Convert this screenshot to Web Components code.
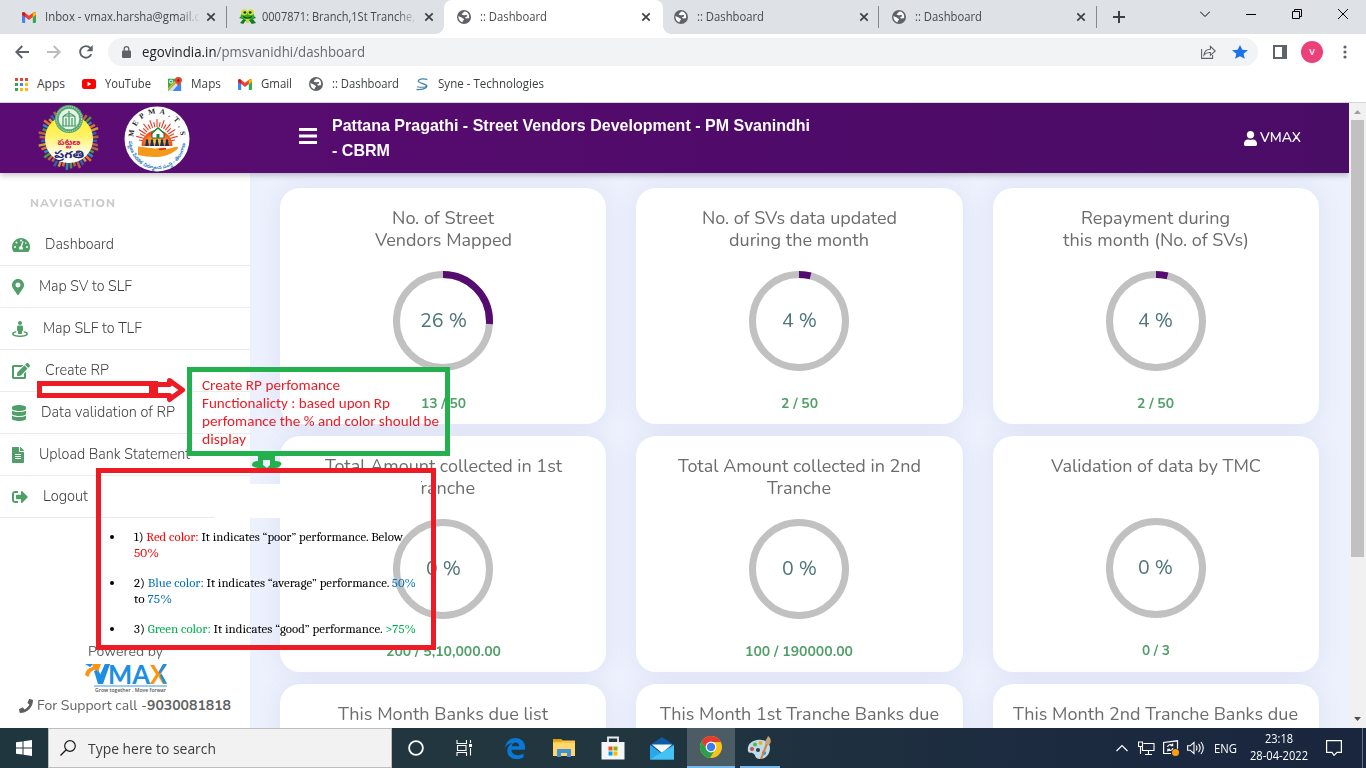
<!DOCTYPE html>
<html lang="en">
<head>
<meta charset="utf-8">
<title>:: Dashboard</title>
<style>
html,body{margin:0;height:768px;overflow:hidden;background:#fff}
</style>
</head>
<body>
<desk-screen></desk-screen>
<script>
const el = (name, html, setup) => customElements.define(name, class extends HTMLElement {
  constructor() {
    super();
    const root = this.attachShadow({ mode: 'open' });
    root.innerHTML = typeof html === 'function' ? html(this) : html;
    if (setup) setup(this, root);
  }
});

/* ---------- icon library ---------- */
const ICONS = {
  globe: ['0 0 14 14', '<circle cx="7" cy="7" r="7" fill="#5f6368"/><path d="M1.600 5.700C2.400 7.200 4.300 6.700 5 7.700c.5.9 1.900.5 2 1.500 0 1.200-1.700 1-1.300 3C3.200 11.800 1 9.200 1.600 5.700zM8 1.600c-1.900.3-1.500 1.500-2.700 1.900-1.100.4-.4 1.500.6 1.500 1.100 0 1.700.6 2.500.1.800-.4 2 0 1.800.9-.1.900-1.600.8-2 1.500-.3.800.9 1 1.800.9 1-.1 1.400.1 2.100-.4C12.700 5.100 11.100 1.900 8 1.600z" fill="#fff"/>'],
  gmail: ['0 0 14 11', '<path d="M0 1.500V10a1 1 0 0 0 1 1h2.200V5z" fill="#4285f4"/><path d="M14 1.500V10a1 1 0 0 1-1 1h-2.200V5z" fill="#34a853"/><path d="M0 2.500V1.600C0 .2 1.500-.4 2.600.4L7 3.700 11.400.4C12.500-.4 14 .2 14 1.600v.9L10.800 5.100 7 8 3.200 5.100z" fill="#ea4335"/><path d="M0 1.600v1.200l3.200 2.400V.9C1.800-.4 0 .2 0 1.600z" fill="#c5221f"/><path d="M14 1.600v1.200l-3.200 2.400V.9C12.200-.4 14 .2 14 1.600z" fill="#fbbc04"/>'],
  frog: ['0 0 16 16', '<path d="M0 9l4 1-3 4 3 1 2-3h4l2 3 4-1-3-4 3-1-3-3H4z" fill="#157b25"/><ellipse cx="8" cy="7" rx="6.500" ry="4.300" fill="#35a92a"/><circle cx="5" cy="3.300" r="3" fill="#cfe13a"/><circle cx="11" cy="3.300" r="3" fill="#cfe13a"/><circle cx="5.500" cy="3.500" r="1.300" fill="#173d0a"/><circle cx="10.500" cy="3.500" r="1.300" fill="#173d0a"/><path d="M4 7.500q4 3 8 0" stroke="#0c5416" fill="none"/><path d="M6 10h4l-1 4H7z" fill="#c6d846"/>'],
  close: ['0 0 10 10', '<path d="M1.300 1.300l7.400 7.400M8.700 1.300L1.300 8.700" stroke="#3c4043" stroke-width="1.700"/>'],
  plus: ['0 0 12 12', '<path d="M6 0v12M0 6h12" stroke="#3c4043" stroke-width="2"/>'],
  back: ['0 0 14 14', '<path d="M14 7H1.500M7.300 1L1.300 7l6 6" stroke="#5f6368" stroke-width="1.900" fill="none"/>'],
  fwd: ['0 0 14 14', '<path d="M0 7h12.500M6.700 1l6 6-6 6" stroke="#babcbe" stroke-width="1.900" fill="none"/>'],
  reload: ['0 0 14 14', '<path d="M12.300 9.200A5.800 5.800 0 1 1 11.300 3" stroke="#5f6368" stroke-width="1.900" fill="none"/><path d="M13.700 0v6.300H7.500z" fill="#5f6368"/>'],
  lock: ['0 0 9 12', '<rect y="4.500" width="9" height="7.500" rx="1" fill="#5f6368"/><path d="M2.200 5V3a2.300 2.300 0 0 1 4.600 0v2" stroke="#5f6368" stroke-width="1.300" fill="none"/>'],
  share: ['0 0 15 14', '<path d="M.6 4v9.400h11V10M3 10c.4-4 3-5.800 6.400-5.800V1.300L14.200 6 9.400 10.300V7.500C6.500 7.300 4.500 8 3 10z" stroke="#5f6368" stroke-width="1.100" fill="none"/>'],
  star: ['0 0 24 24', '<path d="M12 17.800L19.200 22l-1.900-8.200 6.700-5.500-8.500-.7L12 0 8.500 7.600 0 8.300l6.500 5.500L4.600 22z" fill="#1a73e8"/>'],
  panel: ['0 0 14 14', '<path fill-rule="evenodd" d="M0 0h14v14H0zM2 2h7v10H2z" fill="#5f6368"/>'],
  dots: ['0 0 4 14', '<circle cx="2" cy="2" r="1.600" fill="#5f6368"/><circle cx="2" cy="7" r="1.600" fill="#5f6368"/><circle cx="2" cy="12" r="1.600" fill="#5f6368"/>'],
  wchev: ['0 0 10 6', '<path d="M0 .5L5 5.500 10 .5" stroke="#000" fill="none"/>'],
  wmin: ['0 0 10 10', '<path d="M0 5.500h10" stroke="#000"/>'],
  wmax: ['0 0 10 10', '<path d="M.5 2.500h7v7h-7zM2.500 2.500v-2h7v7h-2" stroke="#000" fill="none"/>'],
  wx: ['0 0 10 10', '<path d="M0 0l10 10M10 0L0 10" stroke="#000"/>'],
  apps: ['0 0 13 13', '<g><path d="M0 0h3v3H0zM5 0h3v3H5zM10 0h3v3h-3z" fill="#ea4335"/><path d="M0 5h3v3H0z" fill="#34a853"/><path d="M5 5h3v3H5z" fill="#4285f4"/><path d="M10 5h3v3h-3z" fill="#fbbc04"/><path d="M0 10h3v3H0z" fill="#34a853"/><path d="M5 10h3v3H5zM10 10h3v3h-3z" fill="#fbbc04"/></g>'],
  youtube: ['0 0 14 10', '<rect width="14" height="10" rx="2.500" fill="#f00"/><path d="M5.500 2.800L9.300 5 5.500 7.200z" fill="#fff"/>'],
  maps: ['0 0 15 15', '<path d="M0 2h11l3 5v8H0z" fill="#34a853"/><path d="M0 15L9 6l5 5v4z" fill="#d8dde2"/><path d="M5 15l7-8 2 2v6z" fill="#4285f4"/><path d="M0 13L10 3" stroke="#fbbc04" stroke-width="1.500"/><circle cx="3.300" cy="5" r="1.700" fill="none" stroke="#fff"/><path d="M11 0a3.700 3.700 0 0 0-3.700 3.700C7.300 6 10 7 11 10c1-3 4-4 4-6.300A3.800 3.800 0 0 0 11 0z" fill="#ea4335"/><circle cx="11" cy="3.700" r="1.300" fill="#8c1d18"/>'],
  syne: ['0 0 12 13', '<path d="M10.500 1.300C5.500.2 2 1 2.200 3.300c.2 2 7 2.200 7.800 4.700C10 10.500 5 12 .5 11.500" stroke="#3b86ad" stroke-width="1.300" fill="none"/><path d="M1 8.800c3 .8 7 .7 8.500-.3" stroke="#2a5f85" stroke-width=".8" fill="none"/>'],
  bars: ['0 0 18 16', '<path d="M0 1.500h18M0 8h18M0 14.500h18" stroke="#fff" stroke-width="2.900"/>'],
  user: ['0 0 448 512', '<path fill="#fff" d="M224 256c70.700 0 128-57.300 128-128S294.700 0 224 0 96 57.300 96 128s57.300 128 128 128zm89.600 32h-16.700c-22.200 10.200-46.900 16-72.900 16s-50.600-5.800-72.900-16h-16.700C60.200 288 0 348.200 0 422.400V464c0 26.500 21.500 48 48 48h352c26.500 0 48-21.500 48-48v-41.600c0-74.200-60.200-134.400-134.400-134.400z"/>'],
  tach: ['0 0 576 448', '<path fill="#519f68" d="M288 0C129 0 0 129 0 288c0 52.800 14.300 102.300 39 144.800 5.600 9.600 16.300 15.200 27.400 15.200h443.200c11.100 0 21.800-5.600 27.400-15.200C561.700 390.300 576 340.800 576 288 576 129 447 0 288 0z"/><g fill="#fff"><circle cx="288" cy="80" r="32"/><circle cx="144" cy="144" r="32"/><circle cx="96" cy="288" r="32"/><circle cx="480" cy="288" r="32"/><circle cx="440" cy="160" r="26"/><path d="M351 98c12 4 18 16 15 29l-47 142c32 16 40 65 18 99h-98c-30-45-5-108 42-112l47-142c4-12 12-19 23-16z"/></g>'],
  pin: ['0 0 384 512', '<path fill="#519f68" d="M172.268 501.670C26.970 291.031 0 269.413 0 192 0 85.961 85.961 0 192 0s192 85.961 192 192c0 77.413-26.970 99.031-172.268 309.670-9.535 13.774-29.930 13.773-39.464 0zM192 272c44.183 0 80-35.817 80-80s-35.817-80-80-80-80 35.817-80 80 35.817 80 80 80z"/>'],
  street: ['0 0 512 512', '<g fill="#519f68"><circle cx="256" cy="64" r="64"/><path d="M207 144h98c26 0 47 21 47 47v97c0 18-14 32-32 32v68c0 18-14 28-32 28h-64c-18 0-32-10-32-28v-68c-18 0-32-14-32-32v-97c0-26 21-47 47-47z"/><path d="M138 319C61 333 0 365 0 408c0 66 130 104 256 104s256-38 256-104c0-43-61-75-138-89v49c50 9 85 24 85 40 0 26-91 56-203 56S53 434 53 408c0-16 35-31 85-40z"/></g>'],
  edit: ['0 0 576 512', '<path fill="#519f68" d="M402.600 83.200l90.200 90.200c3.800 3.800 3.800 10 0 13.800L274.400 405.600l-92.800 10.300c-12.400 1.400-22.900-9.100-21.500-21.500l10.300-92.800L388.800 83.200c3.800-3.800 10-3.800 13.800 0zm162-22.900l-48.800-48.800c-15.200-15.200-39.900-15.200-55.200 0l-35.400 35.400c-3.800 3.800-3.800 10 0 13.800l90.200 90.200c3.800 3.800 10 3.800 13.800 0l35.400-35.400c15.200-15.300 15.200-40 0-55.200zM384 346.200V448H64V128h229.800c3.200 0 6.200-1.300 8.500-3.500l40-40c7.600-7.600 2.200-20.500-8.500-20.500H48C21.500 64 0 85.500 0 112v352c0 26.500 21.500 48 48 48h352c26.500 0 48-21.500 48-48V306.200c0-10.700-12.900-16-20.500-8.500l-40 40c-2.200 2.300-3.500 5.300-3.500 8.500z"/>'],
  db: ['0 0 448 512', '<path fill="#519f68" d="M448 73.143v45.714C448 159.143 347.667 192 224 192S0 159.143 0 118.857V73.143C0 32.857 100.333 0 224 0s224 32.857 224 73.143zM448 176v102.857C448 319.143 347.667 352 224 352S0 319.143 0 278.857V176c48.125 33.143 136.208 48.572 224 48.572S399.874 209.143 448 176zm0 160v102.857C448 479.143 347.667 512 224 512S0 479.143 0 438.857V336c48.125 33.143 136.208 48.572 224 48.572S399.874 369.143 448 336z"/>'],
  file: ['0 0 384 512', '<path fill="#519f68" d="M224 136V0H24C10.700 0 0 10.700 0 24v464c0 13.300 10.700 24 24 24h336c13.300 0 24-10.700 24-24V160H248c-13.200 0-24-10.800-24-24zm64 236c0 6.600-5.400 12-12 12H108c-6.600 0-12-5.400-12-12v-8c0-6.600 5.400-12 12-12h168c6.600 0 12 5.400 12 12v8zm0-64c0 6.600-5.400 12-12 12H108c-6.600 0-12-5.400-12-12v-8c0-6.600 5.400-12 12-12h168c6.600 0 12 5.400 12 12v8zm0-72v8c0 6.600-5.400 12-12 12H108c-6.600 0-12-5.400-12-12v-8c0-6.600 5.400-12 12-12h168c6.600 0 12 5.400 12 12zm96-114.100v6.100H256V0h6.100c6.400 0 12.500 2.500 17 7l97.900 98c4.500 4.500 7 10.600 7 16.900z"/>'],
  out: ['0 0 512 512', '<path fill="#519f68" d="M497 273L329 441c-15 15-41 4.500-41-17v-96H152c-13.300 0-24-10.700-24-24v-96c0-13.300 10.700-24 24-24h136V88c0-21.400 25.900-32 41-17l168 168c9.300 9.400 9.300 24.600 0 34zM192 436v-40c0-6.600-5.400-12-12-12H96c-17.700 0-32-14.300-32-32V160c0-17.700 14.300-32 32-32h84c6.600 0 12-5.400 12-12V76c0-6.600-5.400-12-12-12H96c-53 0-96 43-96 96v192c0 53 43 96 96 96h84c6.600 0 12-5.400 12-12z"/>'],
  phone: ['0 0 512 512', '<path fill="#5f5f5f" d="M493.400 24.600l-104-24c-11.300-2.600-22.900 3.300-27.500 13.900l-48 112c-4.200 9.800-1.400 21.300 6.900 28l60.600 49.600c-36 76.700-98.900 140.500-177.200 177.200l-49.600-60.600c-6.800-8.300-18.200-11.100-28-6.900l-112 48C3.900 366.500-2 378.100.6 389.400l24 104C27.100 504.200 36.700 512 48 512c256.100 0 464-207.500 464-464 0-11.200-7.700-20.900-18.600-23.400z"/>'],
  win: ['0 0 16 16', '<path d="M0 2.300L6.500 1.400v6.100H0zM7.500 1.200L16 0v7.500H7.500zM0 8.500h6.500v6.100L0 13.700zM7.500 8.500H16V16l-8.500-1.200z" fill="#fff"/>'],
  search: ['0 0 16 16', '<circle cx="10" cy="6" r="5.300" stroke="#1b1b1b" stroke-width="1.200" fill="none"/><path d="M6.200 9.800L.5 15.500" stroke="#1b1b1b" stroke-width="1.300"/>'],
  cortana: ['0 0 16 16', '<circle cx="8" cy="8" r="6.900" stroke="#fff" stroke-width="1.800" fill="none"/>'],
  taskview: ['0 0 17 16', '<path d="M1 0v3.500h9.500V0M1 16v-3.500h9.500V16M1.500 5.500h8.500v5H1.500zM14.500 0v3M14.500 8v7.500" stroke="#fff" stroke-width="1.100" fill="none"/><rect x="13" y="4" width="3" height="3" fill="#fff"/>'],
  edge: ['0 0 20 21', '<path d="M0 10C.6 4 5 0 10.500 0 16.500 0 20 4.300 20 9.500v2.300H6.500c0 6.200 7.500 6.500 12 3.600v4.200C11.500 23.300 2.300 20.500 2.300 13c0-4 2.600-6.800 5.800-8C4 5.200 1.500 7.300 0 10zM6.700 8.300h7.500C14.200 3.500 7.300 3.300 6.700 8.300z" fill="#0a78d7"/>'],
  explorer: ['0 0 22 18', '<path d="M0 0h8l1.500 1.500H22V17H0z" fill="#f8c843"/><path d="M0 0h8l1 2.500H0z" fill="#dca010"/><path d="M0 4h22v13H0z" fill="#ffd76a"/><path d="M4 18v-8h14v8h-4v-4H8v4z" fill="#4190d8"/>'],
  store: ['0 0 24 24', '<path d="M7 8V1.500h10V8" stroke="#e9edf0" stroke-width="1.800" fill="none"/><path d="M.5 6h23v17.500H.5z" fill="#f5f5f5"/><path d="M7.500 10.500h4v4h-4z" fill="#f25022"/><path d="M12.500 10.500h4v4h-4z" fill="#7fba00"/><path d="M7.500 15.500h4v4h-4z" fill="#00a4ef"/><path d="M12.500 15.500h4v4h-4z" fill="#ffb900"/>'],
  mail: ['0 0 24 23', '<path d="M0 8L12 0l12 8v4H0z" fill="#0c5ca6"/><path d="M2 7.500h20L12 16z" fill="#f4f8fb"/><path d="M0 8l12 8.500L24 8v14.500H0z" fill="#28a8ea"/><path d="M0 22.500L24 8v14.500z" fill="#45c2f4"/>'],
  chrome: ['0 0 24 24', '<circle cx="12" cy="12" r="11" fill="#fbc318"/><path d="M12 1A11 11 0 0 0 2.500 6.500L7.700 14.500 12 12V7h9.800A11 11 0 0 0 12 1z" fill="#e33b2e"/><path d="M2.500 6.500A11 11 0 0 0 11 23l5.200-8.500L8 14.500z" fill="#2c9f4b"/><circle cx="12" cy="12" r="5.400" fill="#fff"/><circle cx="12" cy="12" r="4.200" fill="#3c7df0"/>'],
  paint: ['0 0 24 24', '<path d="M10 4C3 5 0 10 1 15c1 3 4 1 6 3s1 5 6 5c6 0 10-5 10-11S17 3 10 4z" fill="#bcdcec"/><circle cx="11" cy="14" r="2" fill="#2a3b46"/><circle cx="5" cy="13" r="2" fill="#dc4b3c"/><circle cx="8" cy="8.500" r="2" fill="#58b747"/><circle cx="13.500" cy="7" r="2" fill="#e8ae2c"/><circle cx="17" cy="17" r="2" fill="#3688d8"/><path d="M13 23l6-16 2 1-6 15z" fill="#d98230"/><path d="M18 7c0-3 2-4 3-7 3 2 4 6 1 9z" fill="#c5a374"/>'],
  tchev: ['0 0 12 8', '<path d="M.5 7L6 1.500 11.500 7" stroke="#fff" stroke-width="1.200" fill="none"/>'],
  net: ['0 0 17 14', '<path d="M5.500 2.500H16v7H4.500V6M7 13.500h7M10.500 9.500v4M.5 1h4v4.500h-4zM2.500 5.500V13" stroke="#fff" stroke-width="1.100" fill="none"/>'],
  update: ['0 0 16 16', '<path d="M8 13.500H.6V2.500L14.500.8v8" stroke="#fff" stroke-width="1.200" fill="none"/><path d="M4.500 7a3 3 0 0 1 5-1.500M10 8a3 3 0 0 1-5 1.500M9.700 3.500v2.200H7.500M4.800 11.500V9.300H7" stroke="#fff" stroke-width="1.100" fill="none"/><circle cx="12.500" cy="12.500" r="3.500" fill="#ff9b10"/>'],
  vol: ['0 0 17 14', '<path d="M.6 4.800h2.600L7 1.500v11L3.200 9.200H.6zM9 4.500q2 2.500 0 5M11.500 2.800q3.300 4.200 0 8.400M14 1q4.500 6 0 12" stroke="#fff" stroke-width="1.100" fill="none"/>'],
  notif: ['0 0 16 16', '<path d="M.6.600h14.800v11.800H11L8 15.400 6 12.400H.6z" stroke="#fff" stroke-width="1.200" fill="none"/>'],
  up: ['0 0 8 4', '<path d="M0 4l4-4 4 4z" fill="#a0a0a0"/>'],
  down: ['0 0 8 4', '<path d="M0 0l4 4 4-4z" fill="#505050"/>']
};
el('ui-icon', h => {
  const [box, body] = ICONS[h.getAttribute('name')];
  return `<style>:host{display:block;flex:none;width:${h.getAttribute('w')}px;height:${h.getAttribute('h')}px}svg{display:block;width:100%;height:100%}</style><svg viewBox="${box}" preserveAspectRatio="none">${body}</svg>`;
});

/* ---------- browser window ---------- */
el('browser-tab', h => `<style>
:host{display:grid;grid-template-columns:35.5px 160px 1fr;width:217.500px;height:34px;align-items:center;font:12px/34px "Open Sans",sans-serif;color:#45494d;position:relative;box-sizing:border-box}
.i{padding-left:12.500px}.t{overflow:hidden;white-space:nowrap;height:34px;width:156px}
:host([fade]) .t{-webkit-mask-image:linear-gradient(90deg,#000 135px,transparent 155px)}
.c{padding-left:1.500px}
:host([active]){background:#fff;border-radius:8px 8px 0 0;width:219px;margin-right:-1.500px}
:host([active])::before,:host([active])::after{content:"";position:absolute;bottom:0;width:8px;height:8px}
:host([active])::before{left:-8px;background:radial-gradient(circle at 0 0,transparent 7.500px,#fff 8px)}
:host([active])::after{right:-8px;background:radial-gradient(circle at 100% 0,transparent 7.500px,#fff 8px)}
:host([sep]){border-right:1px solid #85888c;border-image:linear-gradient(transparent 7px,#85888c 7px 27px,transparent 27px) 1}
</style><div class="i"><slot name="icon"></slot></div><div class="t"><slot></slot></div><div class="c"><ui-icon name="close" w="10" h="10"></ui-icon></div>`);

el('tab-strip', `<style>
:host{display:flex;height:34px;background:#dee1e6;padding-left:9px;box-sizing:border-box}
.new{width:92px;padding:11px 0 0 16px;box-sizing:border-box}
.w{display:flex;margin-left:auto;gap:36px;padding:9px 18px 0 0;align-items:center;height:10px}
</style>
<browser-tab sep fade><ui-icon slot="icon" name="gmail" w="14" h="11"></ui-icon><fit-text w="155">Inbox - vmax.harsha@gmail.c</fit-text></browser-tab>
<browser-tab fade><ui-icon slot="icon" name="frog" w="17" h="16"></ui-icon><fit-text w="153">0007871: Branch,1St Tranche,</fit-text></browser-tab>
<browser-tab active><ui-icon slot="icon" name="globe" w="14" h="14"></ui-icon><fit-text w="67">:: Dashboard</fit-text></browser-tab>
<browser-tab sep><ui-icon slot="icon" name="globe" w="14" h="14"></ui-icon><fit-text w="67">:: Dashboard</fit-text></browser-tab>
<browser-tab sep><ui-icon slot="icon" name="globe" w="14" h="14"></ui-icon><fit-text w="67">:: Dashboard</fit-text></browser-tab>
<div class="new"><ui-icon name="plus" w="12" h="12"></ui-icon></div>
<div class="w"><ui-icon name="wchev" w="10" h="6"></ui-icon><ui-icon name="wmin" w="10" h="10"></ui-icon><ui-icon name="wmax" w="10" h="10"></ui-icon><ui-icon name="wx" w="10" h="10"></ui-icon></div>`);

el('tool-bar', `<style>
:host{display:flex;height:36px;align-items:center;padding-left:15px;gap:18px;box-sizing:border-box;background:#fff;font:14px/28px "Open Sans",sans-serif;color:#666a6e}
.o{display:flex;align-items:center;height:28px;width:1150px;border-radius:14px;background:#f1f3f4;box-sizing:border-box;padding:0 10px 0 14px;margin-left:-3px}
.u{margin-left:11px;flex:1}.u span{color:#202124}
.o ui-icon[name=star]{margin-left:16px}
.av{width:22px;height:22px;border-radius:50%;background:#ec407a;color:#fff;font:600 9px/21px "Open Sans";text-align:center;margin-left:-4px}
.p{margin-left:-3px}ui-icon[name=dots]{margin-left:2px}
</style>
<ui-icon name="back" w="14" h="14"></ui-icon><ui-icon name="fwd" w="14" h="14"></ui-icon><ui-icon name="reload" w="14" h="14"></ui-icon>
<div class="o"><ui-icon name="lock" w="9" h="12"></ui-icon><div class="u"><fit-text w="223"><span>egovindia.in</span>/pmsvanidhi/dashboard</fit-text></div><ui-icon name="share" w="15" h="14"></ui-icon><ui-icon name="star" w="16" h="15"></ui-icon></div>
<ui-icon class="p" name="panel" w="14" h="14"></ui-icon><div class="av">V</div><ui-icon name="dots" w="4" h="14"></ui-icon>`);

el('book-mark', `<style>:host{display:flex;align-items:center;gap:9px}</style><slot name="icon"></slot><slot></slot>`);
el('bookmark-bar', `<style>
:host{display:flex;align-items:center;padding:0 0 4px 15px;box-sizing:border-box;background:#fff;font:12px/20px "Open Sans",sans-serif;color:#3c4043;gap:17px;border-bottom:1px solid #d5d5d9;height:33px}
</style>
<book-mark><ui-icon slot="icon" name="apps" w="13" h="13"></ui-icon><fit-text w="28">Apps</fit-text></book-mark>
<book-mark><ui-icon slot="icon" name="youtube" w="14" h="10"></ui-icon><fit-text w="46">YouTube</fit-text></book-mark>
<book-mark><ui-icon slot="icon" name="maps" w="14" h="14"></ui-icon><fit-text w="30">Maps</fit-text></book-mark>
<book-mark><ui-icon slot="icon" name="gmail" w="14" h="11"></ui-icon><fit-text w="31">Gmail</fit-text></book-mark>
<book-mark><ui-icon slot="icon" name="globe" w="14" h="14"></ui-icon><fit-text w="67">:: Dashboard</fit-text></book-mark>
<book-mark><ui-icon slot="icon" name="syne" w="13" h="13"></ui-icon><fit-text w="106">Syne - Technologies</fit-text></book-mark>`);

/* ---------- header emblems ---------- */
el('pragathi-logo', () => {
  const cols = ['#2c65a8', '#d9762c', '#4c9b3f', '#a9654a', '#c9a13c', '#2b8fb0', '#b06a3a'];
  let rays = '';
  for (let i = 0; i < 44; i++) {
    const a = (i / 44) * Math.PI * 2 + .07, r = 28 + (i % 3) * 1.5;
    rays += `<path d="M${31 + 22 * Math.cos(a)} ${34 + 22 * Math.sin(a)}L${31 + r * Math.cos(a)} ${34 + r * Math.sin(a)}" stroke="${cols[(i * 3) % 7]}" stroke-width="2.500"/>`;
  }
  return `<style>:host{display:block;width:62px;height:66px}svg{display:block;overflow:visible}</style>
<svg width="62" height="66"><defs><linearGradient id="y" x2="0" y2="1"><stop offset="0" stop-color="#ffec20"/><stop offset=".45" stop-color="#fff36a"/><stop offset=".8" stop-color="#fffde8"/><stop offset="1" stop-color="#fff"/></linearGradient></defs>${rays}<circle cx="31" cy="34" r="24" fill="url(#y)"/>
<circle cx="31" cy="14" r="14" fill="#58a873"/><circle cx="31" cy="14" r="12.500" fill="none" stroke="#d8ecd9" stroke-dasharray="1 1.200"/><circle cx="31" cy="14" r="10.300" fill="#e7f3e6"/><path d="M25 21V12q6-7 12 0v9M28 21v-8M34 21v-8M24 21h14M31 6v15M26 11h10" stroke="#3f9a63" stroke-width="1.200" fill="none"/>
<text x="31" y="40" text-anchor="middle" font-family="Noto Sans Telugu,Noto Sans,sans-serif" font-weight="700" font-size="8.500" fill="#d81e5b" textLength="23" lengthAdjust="spacingAndGlyphs">పట్టణ</text>
<text x="31" y="53" text-anchor="middle" font-family="Noto Sans Telugu,Noto Sans,sans-serif" font-weight="700" font-size="10.500" fill="#1d2679" textLength="30" lengthAdjust="spacingAndGlyphs">ప్రగతి</text></svg>`;
});
el('mepma-logo', () => {
  let rays = '';
  for (let i = 0; i < 19; i++) {
    const a = Math.PI + (i / 18) * Math.PI, r = i % 2 ? 21 : 18;
    rays += `<path d="M${33 + 13 * Math.cos(a)} ${35 + 14 * Math.sin(a)}L${33 + r * Math.cos(a)} ${34 + r * Math.sin(a)}" stroke="#e6391f" stroke-width="1.100"/>`;
  }
  return `<style>:host{display:block;width:66px;height:66px}svg{display:block;overflow:visible}</style>
<svg width="66" height="66"><defs><radialGradient id="s" cy=".7"><stop offset="0" stop-color="#ffe23a"/><stop offset="1" stop-color="#f0531d"/></radialGradient><path id="t" d="M9.500 31a23.500 23.500 0 0 1 47 0"/><path id="b" d="M4.800 35a28.200 28.200 0 0 0 56.400 0"/></defs>
<circle cx="33" cy="33" r="32.500" fill="#fff"/>${rays}<path d="M17.500 40a15.500 16 0 1 1 31 0z" fill="url(#s)"/>
<path d="M28 27l6-5 6 5v5H28z" fill="#fff" stroke="#234" stroke-width=".8"/><path d="M27.500 27.500L34 22l6.500 5.500" stroke="#168a3a" stroke-width="1.500" fill="none"/><path d="M32.500 28h3v4h-3z" fill="#168a3a"/>
<g fill="#16305e"><path d="M21 40l1-5h2l1 5zM26 40l1-5h2l1 5zM31 40l1-5h2l1 5zM36 40l1-5h2l1 5zM41 40l1-5h2l1 5z"/><circle cx="23" cy="34.500" r="1.200"/><circle cx="28" cy="34.500" r="1.200"/><circle cx="33" cy="34.500" r="1.200"/><circle cx="38" cy="34.500" r="1.200"/><circle cx="43" cy="34.500" r="1.200"/></g>
<path d="M14 40.500q8 1 17 2l9-1q3 1-1 2.500l12-3q5-1 2 2.500-9 7-19 7.500t-20-2z" fill="#f49a1a"/><path d="M35 43.500l7-.8" stroke="#d22" stroke-width="1.600"/>
<text font-family="Liberation Serif,serif" font-weight="700" font-size="7.500" fill="#222"><textPath href="#t" textLength="72">MEPMA.T.S</textPath></text>
<text font-family="Noto Sans Telugu,Noto Sans,sans-serif" font-weight="700" font-size="5" fill="#2f7fc0"><textPath href="#b" textLength="86" lengthAdjust="spacingAndGlyphs">పట్టణ పేదరిక నిర్మూలన సంస్థ - తెలంగాణ</textPath></text></svg>`;
});

el('app-header', `<style>
:host{display:flex;height:70px;background:linear-gradient(90deg,#5b0c73,#4f0b69 60%,#4a0d66);box-shadow:0 2px 6px rgba(0,0,0,.25);position:relative;color:#fff;box-sizing:border-box;padding-left:38px;align-items:flex-start;z-index:1}
pragathi-logo{margin-top:2px}mepma-logo{margin:3px 0 0 24px}
.b{margin:25px 0 0 109px}
.t{font:700 16.500px/25px "Liberation Sans",Arial,sans-serif;margin:10px 0 0 15px;flex:1}
.t fit-text{display:block}
.u{display:flex;gap:3px;align-items:center;margin:24px 48px 0 0;font:600 13.500px/22px Nunito,Lato,sans-serif}
</style><pragathi-logo></pragathi-logo><mepma-logo></mepma-logo><ui-icon class="b" name="bars" w="18" h="16"></ui-icon>
<div class="t"><fit-text w="478">Pattana Pragathi - Street Vendors Development - PM Svanindhi</fit-text><fit-text w="58">- CBRM</fit-text></div>
<div class="u"><ui-icon name="user" w="13" h="15"></ui-icon><fit-text w="41">VMAX</fit-text></div>`);

/* ---------- sidebar ---------- */
el('nav-item', `<style>:host{display:flex;align-items:center;height:42px;box-sizing:border-box;border-bottom:1px solid #ebebeb;padding-left:12px;gap:15px;font:300 15px/22px Nunito,Lato,sans-serif;color:#3f3f3f}::slotted(fit-text){margin-top:-1px}</style><slot name="icon"></slot><slot></slot>`);
el('vmax-logo', `<style>:host{display:block;width:84px;height:30px}svg{display:block;overflow:visible}</style>
<svg width="84" height="30"><path d="M11 6l5 14 10-19h-5l-5 11-2-6zM1 1h8L6 4z" fill="#1c8fe3"/><path d="M10 8l4 13h5L26 1h-5l-4 12-3-6z" fill="#1c8fe3"/><path d="M1 12Q2 5 9 4L8 1h9l-3 8-2-2.500Q6 7 4.500 14z" fill="#fb9410"/>
<text x="24" y="20.500" font-family="Lato,sans-serif" font-weight="700" font-size="27" fill="#1c8fe3" textLength="42" lengthAdjust="spacingAndGlyphs">MA</text><text x="66" y="20.500" font-family="Lato,sans-serif" font-weight="700" font-size="27" fill="#fb9410" textLength="17" lengthAdjust="spacingAndGlyphs">X</text><path d="M83 1h-4l-4.500 8 1.500 2zM76 13l3.500 7.500H83L77.500 10.500z" fill="#1c8fe3"/>
<path d="M10 23h73" stroke="#3d9be0"/><text x="11" y="28.800" font-family="Open Sans,sans-serif" font-weight="600" font-size="4.800" fill="#555" textLength="71" lengthAdjust="spacingAndGlyphs">Grow together . Move forwar</text></svg>`);
el('side-bar', `<style>
:host{display:flex;flex-direction:column;width:250px;background:#fff;height:555px;flex:none}
h6{margin:0;padding:18px 0 0 30px;height:32.500px;font:800 12px/24px Nunito,Lato,sans-serif;letter-spacing:1px;color:#cacaca}
nav{margin-top:.5px}
.f{display:flex;flex-direction:column;align-items:center;font:14px/20px Nunito,Lato,sans-serif;color:#626262;margin-top:auto;height:86px}
.f vmax-logo{margin:1px 0 0 2px}.f .s{display:flex;align-items:center;gap:4px;margin-top:3px}
.s div{display:flex}
</style><h6><fit-text w="86">NAVIGATION</fit-text></h6>
<nav>
<nav-item><ui-icon slot="icon" name="tach" w="18" h="14"></ui-icon><fit-text w="69">Dashboard</fit-text></nav-item>
<nav-item><ui-icon slot="icon" name="pin" w="12" h="16"></ui-icon><fit-text w="93">Map SV to SLF</fit-text></nav-item>
<nav-item><ui-icon slot="icon" name="street" w="16" h="16"></ui-icon><fit-text w="99">Map SLF to TLF</fit-text></nav-item>
<nav-item><ui-icon slot="icon" name="edit" w="18" h="16"></ui-icon><fit-text w="64">Create RP</fit-text></nav-item>
<nav-item><ui-icon slot="icon" name="db" w="14" h="16"></ui-icon><fit-text w="134">Data validation of RP</fit-text></nav-item>
<nav-item><ui-icon slot="icon" name="file" w="12" h="16"></ui-icon><fit-text w="151">Upload Bank Statement</fit-text></nav-item>
<nav-item><ui-icon slot="icon" name="out" w="16" h="16"></ui-icon><fit-text w="45">Logout</fit-text></nav-item>
</nav>
<div class="f"><fit-text w="75">Powered by</fit-text><vmax-logo></vmax-logo><div class="s"><ui-icon name="phone" w="14" h="14"></ui-icon><div><fit-text w="110">For Support call -</fit-text><fit-text w="84"><b>9030081818</b></fit-text></div></div></div>`);

/* ---------- dashboard cards ---------- */
el('stat-card', h => {
  const pct = +h.getAttribute('pct'), C = 2 * Math.PI * 46.5;
  return `<style>
:host{display:flex;flex-direction:column;align-items:center;height:236px;background:#fff;border-radius:20px;box-shadow:0 0 24px rgba(90,100,170,.1);box-sizing:border-box;padding-top:19px;font:18px/22px Nunito,Lato,sans-serif;color:#6c6c6c}
.t{height:44px;display:flex;flex-direction:column;align-items:center}
.r{display:grid;width:100px;height:100px;margin-top:20px;place-items:center;font-size:20px;color:#4f7479}
svg,.r fit-text{grid-area:1/1}
.n{margin-top:23px;font:700 14px/20px Nunito,Lato,sans-serif;color:#519f68}
:host([up]) .r{margin-top:19px}
</style><div class="t"><slot></slot></div>
<div class="r"><svg width="100" height="100"><circle cx="50" cy="50" r="46.500" fill="none" stroke="#c1c1c1" stroke-width="7"/><circle cx="50" cy="50" r="46.500" fill="none" stroke="#560b70" stroke-width="7" stroke-dasharray="${C * pct / 100} ${C}" transform="rotate(-90 50 50)"/></svg><fit-text w="${pct > 9 ? 47 : 35}">${pct} %</fit-text></div>
<div class="n"><slot name="count"></slot></div>`;
});
el('card-grid', `<style>:host{display:grid;flex:1;grid-template-columns:repeat(3,1fr);gap:12px 30px;padding:15px 30px;align-content:start;background:#edf1fd}</style>
<stat-card pct="26"><fit-text w="102">No. of Street</fit-text><fit-text w="137">Vendors Mapped</fit-text><fit-text slot="count" w="45">13 / 50</fit-text></stat-card>
<stat-card pct="4"><fit-text w="195">No. of SVs data updated</fit-text><fit-text w="140">during the month</fit-text><fit-text slot="count" w="37">2 / 50</fit-text></stat-card>
<stat-card pct="4"><fit-text w="149">Repayment during</fit-text><fit-text w="186">this month (No. of SVs)</fit-text><fit-text slot="count" w="37">2 / 50</fit-text></stat-card>
<stat-card pct="0"><fit-text w="237">Total Amount collected in 1st</fit-text><fit-text w="64">Tranche</fit-text><fit-text slot="count" w="115">200 / 5,10,000.00</fit-text></stat-card>
<stat-card pct="0"><fit-text w="243">Total Amount collected in 2nd</fit-text><fit-text w="64">Tranche</fit-text><fit-text slot="count" w="108">100 / 190000.00</fit-text></stat-card>
<stat-card pct="0" up><fit-text w="210">Validation of data by TMC</fit-text><fit-text slot="count" w="28">0 / 3</fit-text></stat-card>
<stat-card pct="0"><fit-text w="210">This Month Banks due list</fit-text></stat-card>
<stat-card pct="0"><fit-text w="279">This Month 1st Tranche Banks due</fit-text></stat-card>
<stat-card pct="0"><fit-text w="285">This Month 2nd Tranche Banks due</fit-text></stat-card>`);

el('scroll-bar', `<style>:host{display:flex;flex-direction:column;align-items:center;width:17px;background:#f1f1f1;flex:none;justify-content:space-between;box-sizing:border-box;padding:7px 0}
i{display:block;width:13px;height:437px;background:#c1c1c1;margin:6px 0 auto}</style><ui-icon name="up" w="7" h="4"></ui-icon><i></i><ui-icon name="down" w="7" h="4"></ui-icon>`);
el('web-page', `<style>:host{display:flex;height:625px;overflow:hidden}.p{flex:1;display:flex;flex-direction:column;overflow:hidden}.m{display:flex;height:555px;overflow:hidden}</style>
<div class="p"><app-header></app-header><div class="m"><side-bar></side-bar><card-grid></card-grid></div></div><scroll-bar></scroll-bar>`);

/* ---------- taskbar ---------- */
el('task-bar', `<style>
:host{display:flex;height:40px;background:linear-gradient(90deg,#20363f,#21363f 45%,#1c2a40 78%,#19263e);color:#fff;font:12px/17px "Open Sans",sans-serif;position:relative}
.st{width:48px;display:grid;place-items:center}
.se{width:344px;box-sizing:border-box;border:1px solid #bdbdbd;background:#f2f2f2;display:flex;align-items:center;padding-left:11px;gap:12px;color:#3b3b3b;font-size:15px}
.a{display:flex}.a div{width:48px;display:grid;place-items:center;box-sizing:border-box}
.on{background:#4b5c65;border-bottom:2px solid #76b9ed}.op{position:relative}
.op::after{content:"";position:absolute;left:5px;right:3px;bottom:0;height:2px;background:#76b9ed}
.tr{margin-left:auto;display:flex;align-items:center;padding-right:1px}
.tr ui-icon{margin-right:8px}.c{display:flex;flex-direction:column;align-items:center;margin:0 18px 0 13px;padding-bottom:2px}
.e{width:4px;border-left:1px solid #63708a;height:40px;box-sizing:border-box}
</style>
<div class="st"><ui-icon name="win" w="16" h="16"></ui-icon></div>
<div class="se"><ui-icon name="search" w="16" h="16"></ui-icon><fit-text w="128">Type here to search</fit-text></div>
<div class="a"><div><ui-icon name="cortana" w="16" h="16"></ui-icon></div><div><ui-icon name="taskview" w="17" h="16"></ui-icon></div><div style="width:54px"><ui-icon name="edge" w="20" h="21"></ui-icon></div><div style="width:44px"><ui-icon name="explorer" w="22" h="18"></ui-icon></div><div style="width:53px"><ui-icon name="store" w="24" h="24"></ui-icon></div><div style="margin-left:-1px;margin-right:1px"><ui-icon name="mail" w="24" h="23"></ui-icon></div><div class="on"><ui-icon name="chrome" w="24" h="24"></ui-icon></div><div class="op"><ui-icon name="paint" w="24" h="24"></ui-icon></div></div>
<div class="tr"><ui-icon name="tchev" w="12" h="8" style="margin-right:10px"></ui-icon><ui-icon name="net" w="17" h="14"></ui-icon><ui-icon name="update" w="16" h="16"></ui-icon><ui-icon name="vol" w="17" h="14" style="margin-right:10px"></ui-icon><fit-text w="23">ENG</fit-text><div class="c"><fit-text w="28">23:18</fit-text><fit-text w="58">28-04-2022</fit-text></div><ui-icon name="notif" w="16" h="16" style="margin-right:19px"></ui-icon></div><div class="e"></div>`);

/* ---------- annotations drawn over the page ---------- */
el('mark-up', `<style>
:host{position:absolute;inset:0;pointer-events:none}
.w{position:absolute;left:214px;top:484px;width:207px;height:34px;background:#fff}
.w::after{content:"";position:absolute;right:0;top:-10px;width:30px;height:10px;background:#fff}
.g{position:absolute;left:187px;top:367px;width:263px;height:89px;box-sizing:border-box;border:5px solid #22b14c;padding:4px 0 0 10px;font:14.500px/18px Carlito,Lato,sans-serif;color:#ed1c24}
.g fit-text,.n fit-text{display:block}
.r{position:absolute;left:96px;top:468px;width:340px;height:182px;box-sizing:border-box;border:5px solid #ed1c24}
.n{position:absolute;left:110px;top:529px;font:12.500px/16px Cambria,Caladea,"Liberation Serif",serif;color:#000}
.n div{display:grid;grid-template-columns:23.500px auto;margin-bottom:14px}.n i{width:4px;height:4px;border-radius:50%;background:#000;margin-top:6px}
.n b{font-weight:400}.n p{margin:0}svg{position:absolute;left:0;top:0}
</style>
<div class="w"></div>
<svg width="300" height="480"><g fill="#fff" stroke="#ed1c24" stroke-width="5"><path d="M39.500 383.500h112v12h-112z"/><path d="M155.500 384.500h14v-4l13 9.500-13 9.500v-4h-14z" stroke-linejoin="round"/></g><path d="M149 381h9v17h-9z" fill="#ed1c24"/>
<path d="M258 455h17v6q8 0 6 4-2 3-6 3H258q-6-1-6-3 0-4 6-4z" fill="#22b14c"/><path d="M263 460h7v5l-3 3-4-3z" fill="#eef1fe"/></svg>
<div class="g"><fit-text w="138">Create RP perfomance</fit-text><fit-text w="188">Functionalicty : based upon Rp</fit-text><fit-text w="237">perfomance the % and color should be</fit-text><fit-text w="44">display</fit-text></div>
<div class="n"><div><i></i><p><fit-text w="269">1) <b style="color:#f00">Red color:</b> It indicates “poor” performance. Below</fit-text><fit-text w="25"><b style="color:#f00">50%</b></fit-text></p></div>
<div><i></i><p><fit-text w="282">2) <b style="color:#0070c0">Blue color:</b> It indicates “average” performance. <b style="color:#0070c0">50%</b></fit-text><fit-text w="38">to <b style="color:#0070c0">75%</b></fit-text></p></div>
<div><i></i><p><fit-text w="282">3) <b style="color:#00b050">Green color:</b> It indicates “good” performance. <b style="color:#00b050">&gt;75%</b></fit-text></p></div></div>
<div class="r"></div>`);

el('desk-screen', `<style>:host{display:block;width:1366px;height:768px;position:relative;overflow:hidden}</style><tab-strip></tab-strip><tool-bar></tool-bar><bookmark-bar></bookmark-bar><web-page></web-page><task-bar></task-bar><mark-up></mark-up>`);

/* Text run set to an exact advance width. Defined last so that every inherited font is in place. */
customElements.define('fit-text', class extends HTMLElement {
  constructor() {
    super();
    const w = +this.getAttribute('w');
    this.attachShadow({ mode: 'open' }).innerHTML = `<style>:host{display:inline-block;width:${w}px;white-space:nowrap;vertical-align:top}span{display:inline-block;transform-origin:0 50%}</style><span><slot></slot></span>`;
  }
  connectedCallback() {
    const s = this.shadowRoot.querySelector('span');
    s.style.transform = '';
    const n = s.getBoundingClientRect().width;
    if (n) s.style.transform = `scaleX(${this.getAttribute('w') / n})`;
  }
});
</script>
</body>
</html>
